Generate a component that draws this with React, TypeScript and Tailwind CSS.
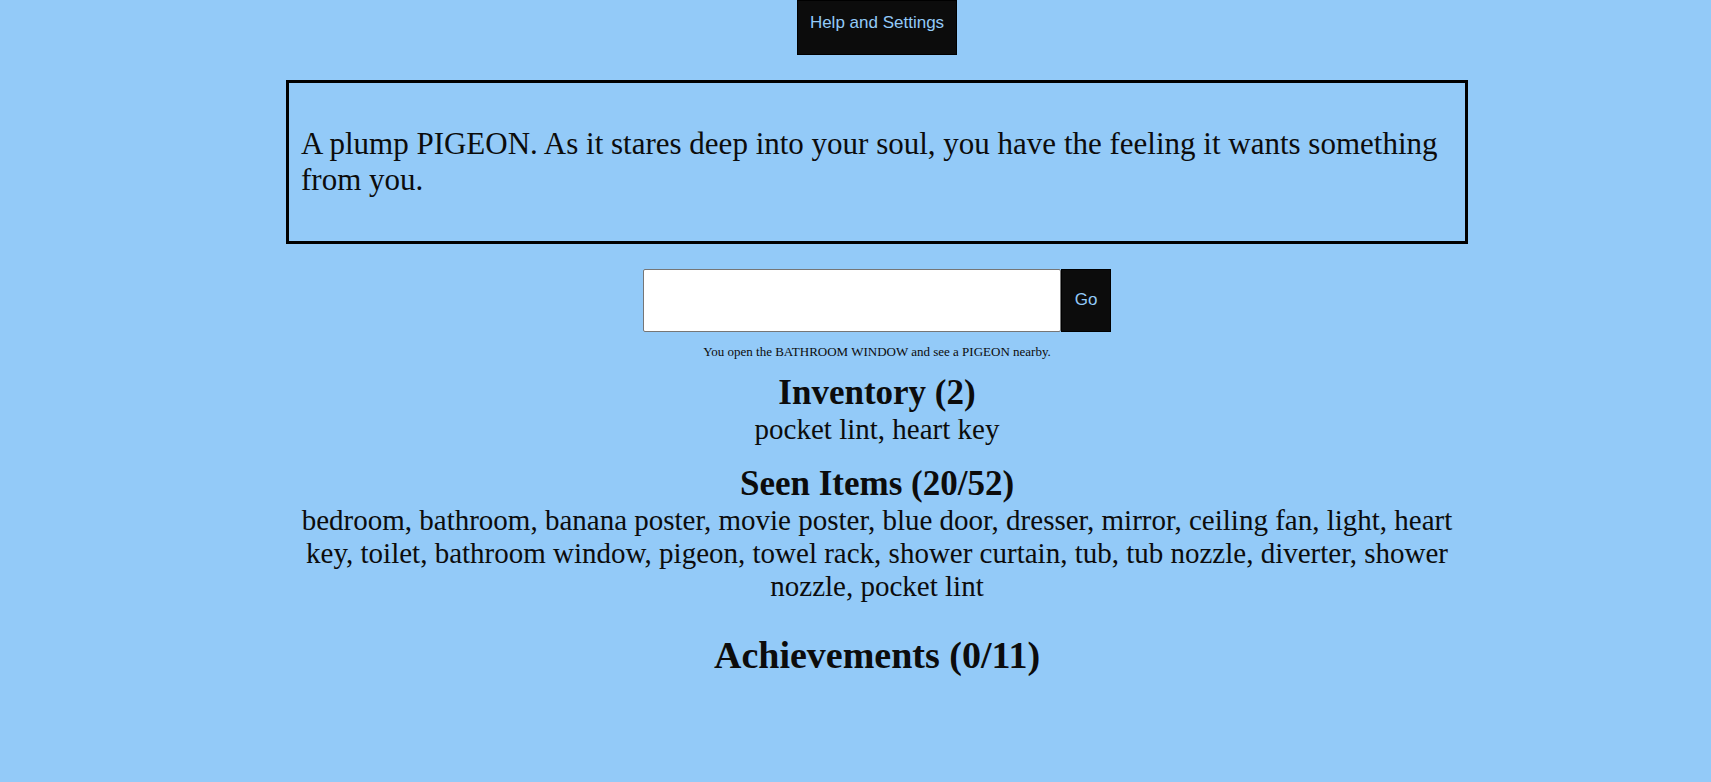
import { useState } from "react";

const inventory = ["pocket lint", "heart key"];

const seenItems = [
  "bedroom", "bathroom", "banana poster", "movie poster", "blue door",
  "dresser", "mirror", "ceiling fan", "light", "heart key", "toilet",
  "bathroom window", "pigeon", "towel rack", "shower curtain", "tub",
  "tub nozzle", "diverter", "shower nozzle", "pocket lint",
];

export default function App() {
  const [command, setCommand] = useState("");

  return (
    <div className="min-h-screen bg-[#93caf8] pl-[43px] font-['Liberation_Serif','Times_New_Roman',serif] text-[#0c0c0c]">
      <main className="mx-auto flex max-w-[1182px] flex-col items-center">
        <button
          type="button"
          className="h-[55px] border border-black bg-[#0c0c0c] px-3 pb-[10px] font-['Liberation_Sans',Arial,sans-serif] text-[17px] leading-5 text-[#93caf8]"
        >
          Help and Settings
        </button>

        <section className="mt-[25px] w-full border-[3px] border-black px-3 py-[43px]">
          <p className="text-[31px] leading-9">
            A plump PIGEON. As it stares deep into your soul, you have the
            feeling it wants something from you.
          </p>
        </section>

        <form
          className="mt-[25px] flex max-w-full"
          onSubmit={(event) => {
            event.preventDefault();
            setCommand("");
          }}
        >
          <input
            type="text"
            aria-label="Command"
            value={command}
            onChange={(event) => setCommand(event.target.value)}
            className="h-[63px] w-[418px] min-w-0 rounded-[2px] border border-[#767676] bg-white px-2 text-[31px] text-[#0c0c0c] outline-none"
          />
          <button
            type="submit"
            className="h-[63px] border border-black bg-[#0c0c0c] px-[13px] pb-[2px] font-['Liberation_Sans',Arial,sans-serif] text-[17px] leading-5 text-[#93caf8]"
          >
            Go
          </button>
        </form>

        <p className="mt-3 text-[13px] leading-4">
          You open the BATHROOM WINDOW and see a PIGEON nearby.
        </p>

        <section className="mt-[13px] w-full px-3 text-center">
          <h2 className="text-[35px] leading-10 font-bold">
            Inventory ({inventory.length})
          </h2>
          <p className="text-[29px] leading-[33px]">{inventory.join(", ")}</p>
        </section>

        <section className="mt-[18px] w-full px-3 text-center">
          <h2 className="text-[35px] leading-10 font-bold">
            Seen Items ({seenItems.length}/52)
          </h2>
          <p className="text-[29px] leading-[33px]">{seenItems.join(", ")}</p>
        </section>

        <h2 className="mt-8 text-[38px] leading-10 font-bold">
          Achievements (0/11)
        </h2>
      </main>
    </div>
  );
}
